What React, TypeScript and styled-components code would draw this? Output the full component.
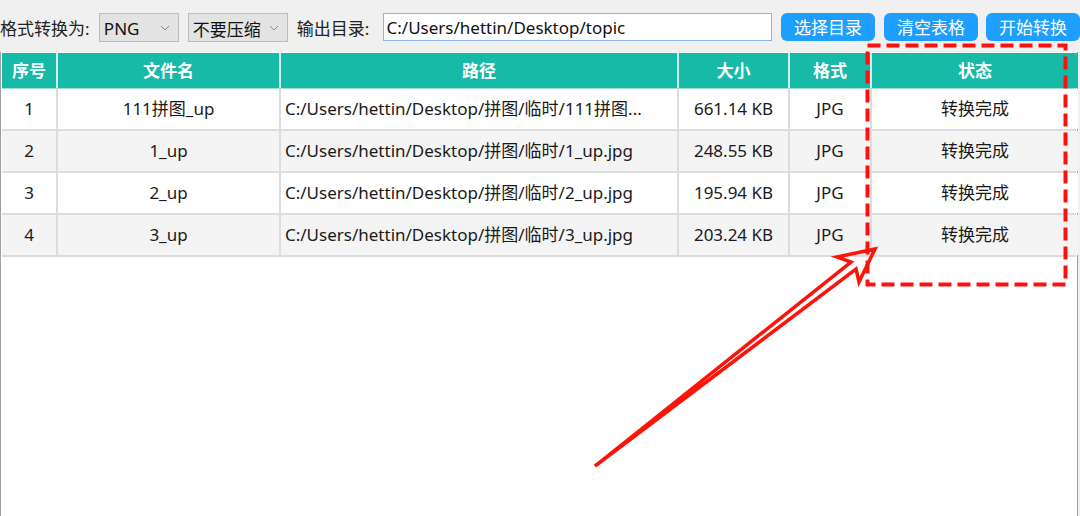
import React from "react";
import styled, { createGlobalStyle } from "styled-components";

const Global = createGlobalStyle`
  html, body { margin: 0; padding: 0; background: #f0f0f0; }
  body { font-family: "Noto Sans", "Noto Sans CJK SC", sans-serif; font-size: 17px; color: #1a1a1a; }
  #root { width: 1080px; height: 516px; overflow: hidden; }
`;

const Page = styled.div`
  position: relative;
  width: 1080px;
  height: 516px;
  display: flex;
  flex-direction: column;
  background: #f0f0f0;
`;

const Toolbar = styled.div`
  height: 52px;
  box-sizing: border-box;
  padding-top: 13px;
  display: flex;
  align-items: flex-start;
  white-space: nowrap;
`;

const Label = styled.span<{ $ml?: number; $w: number }>`
  margin-left: ${(p) => p.$ml ?? 0}px;
  width: ${(p) => p.$w}px;
  height: 30px;
  line-height: 32px;
  font-size: 17px;
  color: #222;
`;

const Select = styled.div<{ $w: number; $ml: number }>`
  margin-left: ${(p) => p.$ml}px;
  width: ${(p) => p.$w}px;
  height: 29px;
  box-sizing: border-box;
  border: 1px solid #bcbcbc;
  background: #e3e3e3;
  display: flex;
  align-items: center;
  justify-content: space-between;
  padding: 1px 8px 0 4px;
  font-size: 17px;
  color: #111;
`;

const Input = styled.div`
  margin-left: 10px;
  width: 390px;
  height: 28px;
  box-sizing: border-box;
  border: 1px solid #8ab4e4;
  background: #fff;
  padding-left: 3px;
  line-height: 28px;
  font-size: 17px;
  color: #111;
`;

const Button = styled.div<{ $ml: number }>`
  margin-left: ${(p) => p.$ml}px;
  width: 94px;
  height: 28px;
  border-radius: 6px;
  background: #1e9fff;
  color: #fff;
  font-size: 17px;
  line-height: 29px;
  text-align: center;
  flex-shrink: 0;
`;

const TablePanel = styled.div`
  flex: 1;
  width: 1078px;
  box-sizing: border-box;
  background: #fff;
  border-left: 1px solid #a0a0a0;
  border-right: 1px solid #a0a0a0;
  padding: 1px 0 0 1px;
`;

const COLS = "54px 221px 396px 109px 80px 206px";

const HeaderRow = styled.div`
  display: grid;
  grid-template-columns: ${COLS};
  column-gap: 2px;
  background: #d2efea;
  border-bottom: 1px solid #9fdcd3;
  width: 1074px;
`;

const HeaderCell = styled.div`
  background: #17b9a7;
  height: 35px;
  line-height: 35px;
  text-align: center;
  color: #fff;
  font-weight: bold;
  font-size: 17px;
`;

const Row = styled.div<{ $alt: boolean }>`
  display: grid;
  grid-template-columns: ${COLS};
  column-gap: 2px;
  background: #dcdcdc;
  border-bottom: 2px solid #dcdcdc;
  width: 1074px;
  & > div { background: ${(p) => (p.$alt ? "#f4f4f4" : "#ffffff")}; }
`;

const Cell = styled.div<{ $left?: boolean }>`
  height: 40px;
  line-height: 40px;
  font-size: 17px;
  color: #1a1a1a;
  text-align: ${(p) => (p.$left ? "left" : "center")};
  padding-left: ${(p) => (p.$left ? "4px" : "0")};
  white-space: nowrap;
  overflow: hidden;
`;

const Overlay = styled.svg`
  position: absolute;
  left: 0;
  top: 0;
  pointer-events: none;
`;

const Chevron = () => (
  <svg width="10" height="6" viewBox="0 0 10 6">
    <path d="M1 1 L5 5 L9 1" fill="none" stroke="#8a8a8a" strokeWidth="1" />
  </svg>
);

const rows = [
  ["1", "111拼图_up", "C:/Users/hettin/Desktop/拼图/临时/111拼图...", "661.14 KB", "JPG", "转换完成"],
  ["2", "1_up", "C:/Users/hettin/Desktop/拼图/临时/1_up.jpg", "248.55 KB", "JPG", "转换完成"],
  ["3", "2_up", "C:/Users/hettin/Desktop/拼图/临时/2_up.jpg", "195.94 KB", "JPG", "转换完成"],
  ["4", "3_up", "C:/Users/hettin/Desktop/拼图/临时/3_up.jpg", "203.24 KB", "JPG", "转换完成"],
];

const headers = ["序号", "文件名", "路径", "大小", "格式", "状态"];

export default function App() {
  return (
    <Page>
      <Global />
      <Toolbar>
        <Label $w={99}>格式转换为:</Label>
        <Select $w={80} $ml={0}>
          <span>PNG</span>
          <Chevron />
        </Select>
        <Select $w={100} $ml={9}>
          <span>不要压缩</span>
          <Chevron />
        </Select>
        <Label $ml={9} $w={76}>输出目录:</Label>
        <Input>C:/Users/hettin/Desktop/topic</Input>
        <Button $ml={9}>选择目录</Button>
        <Button $ml={9}>清空表格</Button>
        <Button $ml={8}>开始转换</Button>
      </Toolbar>
      <TablePanel>
        <HeaderRow>
          {headers.map((h) => (
            <HeaderCell key={h}>{h}</HeaderCell>
          ))}
        </HeaderRow>
        {rows.map((r, i) => (
          <Row key={r[0]} $alt={i % 2 === 1}>
            {r.map((c, j) => (
              <Cell key={j} $left={j === 2}>
                {c}
              </Cell>
            ))}
          </Row>
        ))}
      </TablePanel>
      <Overlay width="1080" height="516" viewBox="0 0 1080 516">
        <rect
          x="867.5"
          y="45.5"
          width="198"
          height="239"
          fill="none"
          stroke="#ff1010"
          strokeWidth="4"
          strokeDasharray="13 6"
        />
        <polygon
          points="595,466 851,262 837,257 875,249 859,282 856,269"
          fill="none"
          stroke="#ff1208"
          strokeWidth="3.5"
          strokeLinejoin="miter"
          strokeLinecap="round"
        />
      </Overlay>
    </Page>
  );
}
